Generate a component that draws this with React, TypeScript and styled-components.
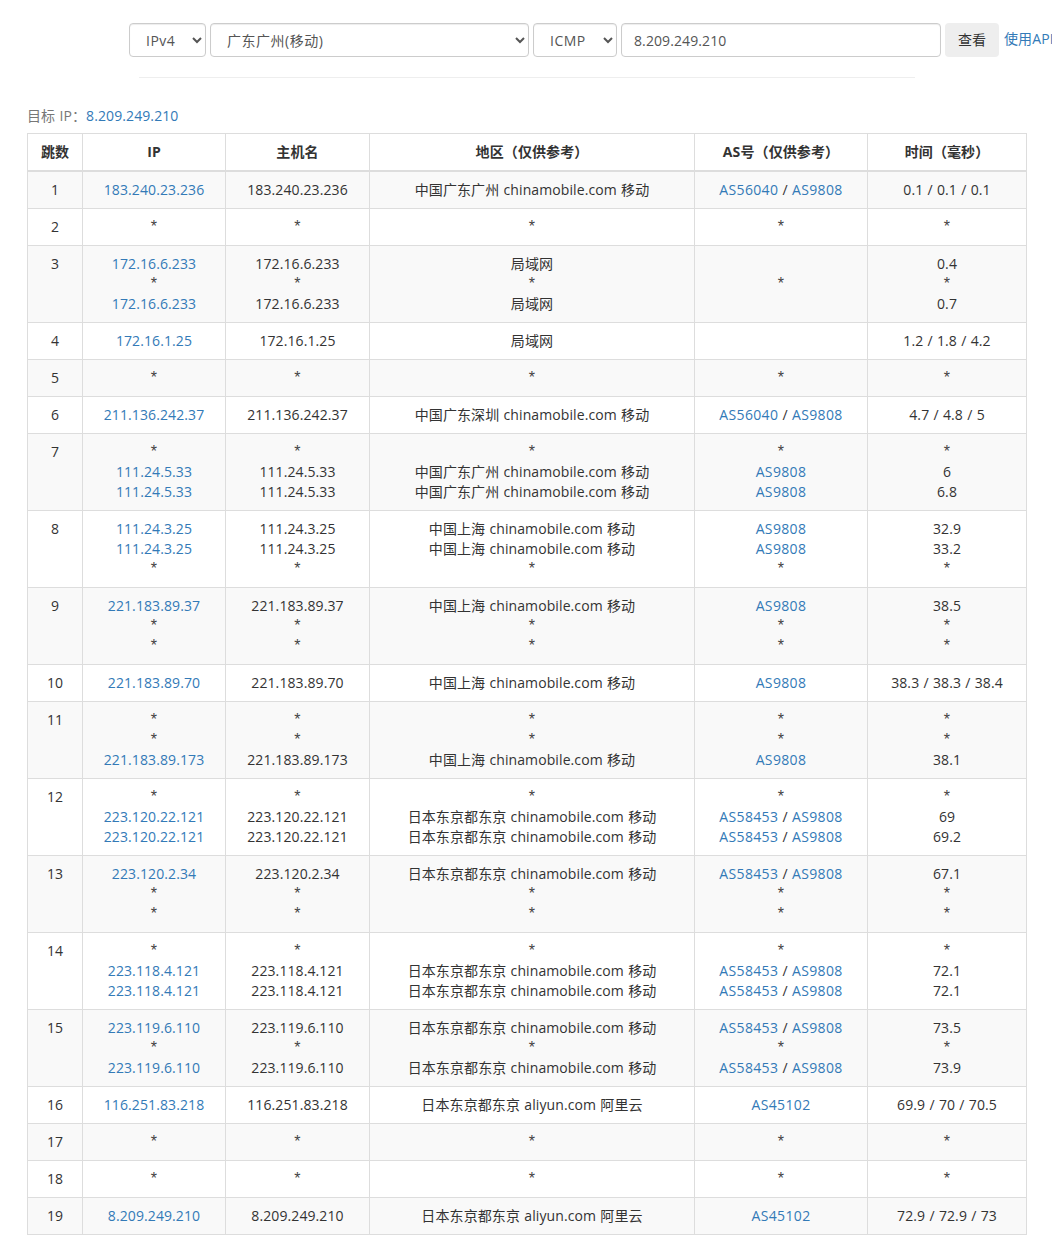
import React from "react";
import styled, { createGlobalStyle } from "styled-components";

const Global = createGlobalStyle`
  html, body { margin: 0; padding: 0; background: #fff; overflow-x: hidden; }
  body { font-family: "Open Sans", "Noto Sans CJK SC", sans-serif; font-size: 14px; line-height: 20px; color: #333; letter-spacing: .1px; word-spacing: .5px; }
`;
const Page = styled.div`
  width: 1052px; height: 1254px; overflow: hidden; padding: 23px 25px 0 27px; box-sizing: border-box;
`;
const QueryForm = styled.form`
  display: flex; align-items: flex-start; gap: 4px; margin-left: 102px; width: 960px;
`;
const Select = styled.select<{ $w: number }>`
  width: ${(p) => p.$w}px; height: 34px; flex: none; box-sizing: border-box; padding: 6px 12px;
  font: inherit; letter-spacing: .5px; color: #555; background: #fff; border: 1px solid #ccc; border-radius: 4px;
  box-shadow: inset 0 1px 1px rgba(0,0,0,.075);
`;
const Input = styled.input`
  width: 320px; height: 34px; flex: none; box-sizing: border-box; padding: 6px 12px;
  font: inherit; letter-spacing: .1px; color: #555; background: #fff; border: 1px solid #ccc; border-radius: 4px;
  box-shadow: inset 0 1px 1px rgba(0,0,0,.075);
`;
const Button = styled.button`
  width: 54px; height: 34px; flex: none; border: 0; border-radius: 4px; background: #eee; color: #333; font: inherit; padding: 0;
`;
const ApiLink = styled.a`
  flex: none; color: #337ab7; text-decoration: none; margin: 6px 0 0 1px;
`;
const Rule = styled.hr`
  border: 0; border-top: 1px solid #eee; margin: 20px 112px 0 112px;
`;
const Target = styled.div`
  color: #777; margin-top: 28px; height: 20px; margin-bottom: 7px;
`;
const Link = styled.a`
  color: #337ab7; text-decoration: none;
`;
const AsLink = styled(Link)`
  letter-spacing: .35px;
`;
const Table = styled.table`
  width: 999px; table-layout: fixed; border-collapse: collapse; border-spacing: 0;
  border: 1px solid #ddd;
`;
const Head = styled.th<{ $w: number }>`
  width: ${(p) => p.$w}px; padding: 8px; border: 1px solid #ddd; border-bottom: 2px solid #ddd;
  text-align: center; font-weight: 700; line-height: 20px; box-sizing: content-box;
`;
const Row = styled.tr<{ $odd: boolean }>`
  background: ${(p) => (p.$odd ? "#f9f9f9" : "#fff")};
`;
const Cell = styled.td`
  padding: 8px; border: 1px solid #ddd; text-align: center; vertical-align: top; line-height: 20px;
`;
const Line = styled.div`
  height: 20px;
`;
const Star = styled.span`
  font-family: "Liberation Sans", sans-serif; font-size: 16px; color: #444;
`;

type L = string;
const A = "AS58453 / AS9808";
const JP = "日本东京都东京 chinamobile.com 移动";
const GZ = "中国广东广州 chinamobile.com 移动";
const SH = "中国上海 chinamobile.com 移动";
const ALI = "日本东京都东京 aliyun.com 阿里云";
const S = "*";

const rows: [L[], L[], L[], L[], L[]][] = [
  [["183.240.23.236"], ["183.240.23.236"], [GZ], ["AS56040 / AS9808"], ["0.1 / 0.1 / 0.1"]],
  [[S], [S], [S], [S], [S]],
  [["172.16.6.233", S, "172.16.6.233"], ["172.16.6.233", S, "172.16.6.233"], ["局域网", S, "局域网"], ["", S, ""], ["0.4", S, "0.7"]],
  [["172.16.1.25"], ["172.16.1.25"], ["局域网"], [""], ["1.2 / 1.8 / 4.2"]],
  [[S], [S], [S], [S], [S]],
  [["211.136.242.37"], ["211.136.242.37"], ["中国广东深圳 chinamobile.com 移动"], ["AS56040 / AS9808"], ["4.7 / 4.8 / 5"]],
  [[S, "111.24.5.33", "111.24.5.33"], [S, "111.24.5.33", "111.24.5.33"], [S, GZ, GZ], [S, "AS9808", "AS9808"], [S, "6", "6.8"]],
  [["111.24.3.25", "111.24.3.25", S], ["111.24.3.25", "111.24.3.25", S], [SH, SH, S], ["AS9808", "AS9808", S], ["32.9", "33.2", S]],
  [["221.183.89.37", S, S], ["221.183.89.37", S, S], [SH, S, S], ["AS9808", S, S], ["38.5", S, S]],
  [["221.183.89.70"], ["221.183.89.70"], [SH], ["AS9808"], ["38.3 / 38.3 / 38.4"]],
  [[S, S, "221.183.89.173"], [S, S, "221.183.89.173"], [S, S, SH], [S, S, "AS9808"], [S, S, "38.1"]],
  [[S, "223.120.22.121", "223.120.22.121"], [S, "223.120.22.121", "223.120.22.121"], [S, JP, JP], [S, A, A], [S, "69", "69.2"]],
  [["223.120.2.34", S, S], ["223.120.2.34", S, S], [JP, S, S], [A, S, S], ["67.1", S, S]],
  [[S, "223.118.4.121", "223.118.4.121"], [S, "223.118.4.121", "223.118.4.121"], [S, JP, JP], [S, A, A], [S, "72.1", "72.1"]],
  [["223.119.6.110", S, "223.119.6.110"], ["223.119.6.110", S, "223.119.6.110"], [JP, S, JP], [A, S, A], ["73.5", S, "73.9"]],
  [["116.251.83.218"], ["116.251.83.218"], [ALI], ["AS45102"], ["69.9 / 70 / 70.5"]],
  [[S], [S], [S], [S], [S]],
  [[S], [S], [S], [S], [S]],
  [["8.209.249.210"], ["8.209.249.210"], [ALI], ["AS45102"], ["72.9 / 72.9 / 73"]],
];

const Plain = ({ text }: { text: string }) => (text === S ? <Star>{S}</Star> : <>{text}</>);

const AsLine = ({ text }: { text: string }) => {
  if (!text.startsWith("AS")) return <Plain text={text} />;
  const parts = text.split(" / ");
  return (
    <>
      {parts.map((p, i) => (
        <React.Fragment key={p}>
          {i > 0 && " / "}
          <AsLink href="#">{p}</AsLink>
        </React.Fragment>
      ))}
    </>
  );
};

export default function App() {
  return (
    <Page>
      <Global />
      <QueryForm>
        <Select $w={77} defaultValue="IPv4"><option>IPv4</option><option>IPv6</option></Select>
        <Select $w={319} defaultValue="gz"><option value="gz">广东广州(移动)</option></Select>
        <Select $w={84} defaultValue="ICMP"><option>ICMP</option><option>TCP</option><option>UDP</option></Select>
        <Input defaultValue="8.209.249.210" />
        <Button type="button">查看</Button>
        <ApiLink href="#">使用API</ApiLink>
      </QueryForm>
      <Rule />
      <Target>目标 IP：<Link href="#">8.209.249.210</Link></Target>
      <Table>
        <thead>
          <tr>
            <Head $w={38}>跳数</Head>
            <Head $w={126}>IP</Head>
            <Head $w={127}>主机名</Head>
            <Head $w={308}>地区（仅供参考）</Head>
            <Head $w={156}>AS号（仅供参考）</Head>
            <Head $w={142}>时间（毫秒）</Head>
          </tr>
        </thead>
        <tbody>
          {rows.map((r, i) => (
            <Row key={i} $odd={i % 2 === 0}>
              <Cell>{i + 1}</Cell>
              <Cell>{r[0].map((t, j) => <Line key={j}>{t === S ? <Star>{S}</Star> : <Link href="#">{t}</Link>}</Line>)}</Cell>
              <Cell>{r[1].map((t, j) => <Line key={j}><Plain text={t} /></Line>)}</Cell>
              <Cell>{r[2].map((t, j) => <Line key={j}><Plain text={t} /></Line>)}</Cell>
              <Cell>{r[3].map((t, j) => <Line key={j}><AsLine text={t} /></Line>)}</Cell>
              <Cell>{r[4].map((t, j) => <Line key={j}><Plain text={t} /></Line>)}</Cell>
            </Row>
          ))}
        </tbody>
      </Table>
    </Page>
  );
}
